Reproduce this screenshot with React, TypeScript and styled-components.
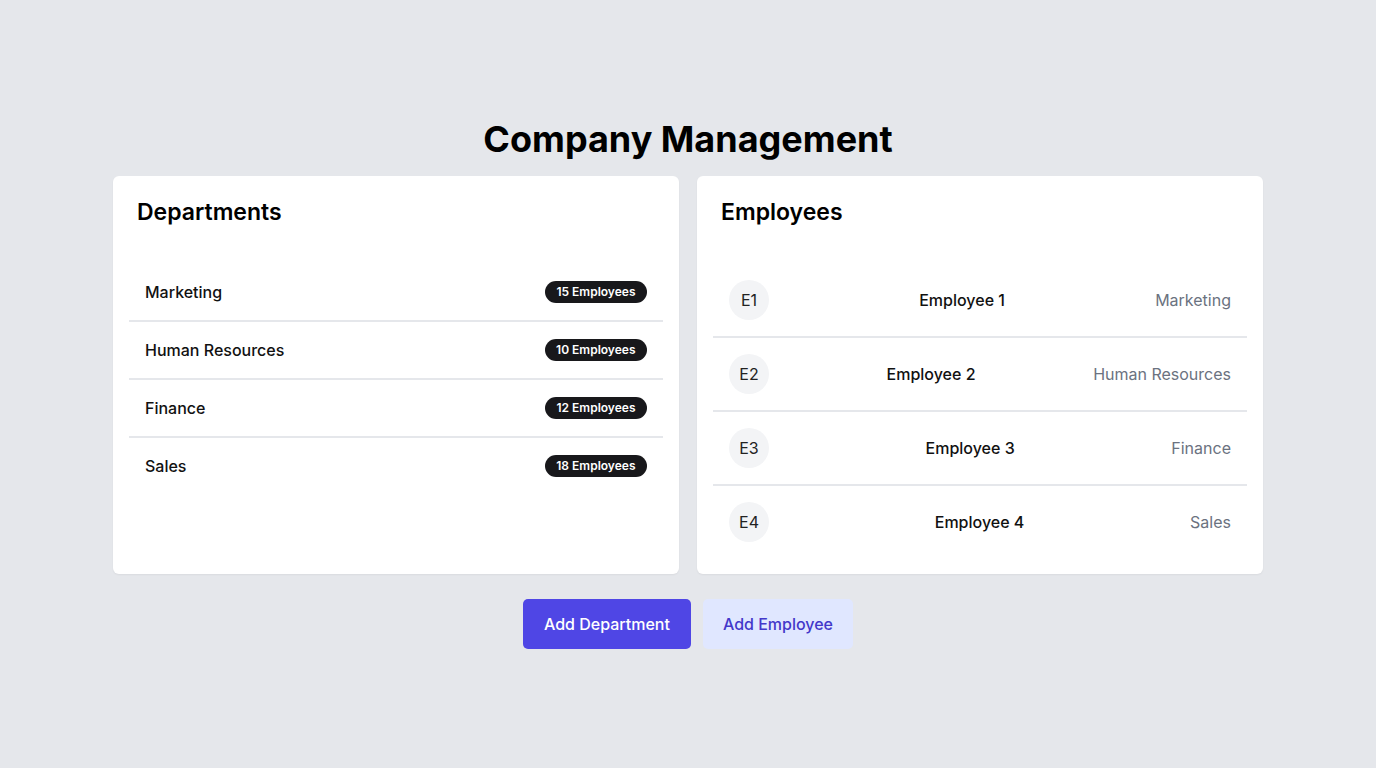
import React from "react";
import styled, { createGlobalStyle } from "styled-components";

const GlobalStyle = createGlobalStyle`
  * { box-sizing: border-box; }
  body {
    margin: 0;
    background: #e5e7eb;
    font-family: Inter, "Noto Sans", sans-serif;
    color: #111;
  }
`;

const Page = styled.div`
  min-height: 100vh;
  display: flex;
  flex-direction: column;
  align-items: center;
  justify-content: center;
  padding: 0 113px;
`;

const Title = styled.h1`
  margin: 0 0 17px;
  font-size: 36px;
  line-height: 40px;
  font-weight: 700;
  color: #000;
`;

const Grid = styled.div`
  width: 100%;
  max-width: 1150px;
  display: grid;
  grid-template-columns: 1fr 1fr;
  gap: 18px;
`;

const Card = styled.section`
  background: #fff;
  border-radius: 6px;
  padding: 24px 16px 15px;
  box-shadow: 0 1px 2px rgba(0, 0, 0, 0.05);
  min-height: 398px;
`;

const CardTitle = styled.h2`
  margin: 0 8px 40px;
  font-size: 23px;
  line-height: 24px;
  font-weight: 600;
  color: #000;
`;

const List = styled.ul`
  list-style: none;
  margin: 0;
  padding: 0;
`;

const DeptRow = styled.li`
  display: flex;
  align-items: center;
  justify-content: space-between;
  padding: 16px;
  line-height: 24px;
  border-bottom: 2px solid #e5e7eb;
  &:last-child { border-bottom: none; }
`;

const DeptName = styled.span`
  font-size: 16px;
  font-weight: 500;
  color: #111;
`;

const Badge = styled.span`
  background: #18181b;
  color: #fff;
  font-size: 12px;
  font-weight: 600;
  line-height: 22px;
  height: 22px;
  padding: 0 11.5px;
  border-radius: 999px;
`;

const EmpRow = styled.li`
  display: flex;
  align-items: center;
  justify-content: space-between;
  padding: 16px;
  border-bottom: 2px solid #e5e7eb;
  &:last-child { border-bottom: none; }
`;

const Avatar = styled.span`
  width: 40px;
  height: 40px;
  border-radius: 50%;
  background: #f3f4f6;
  display: flex;
  align-items: center;
  justify-content: center;
  font-size: 16px;
  color: #222;
`;

const EmpName = styled.span`
  font-size: 16px;
  font-weight: 500;
  color: #111;
`;

const EmpDept = styled.span`
  font-size: 16px;
  color: #6b7280;
`;

const Actions = styled.div`
  display: flex;
  gap: 12px;
  margin-top: 25px;
`;

const Button = styled.button<{ $primary?: boolean }>`
  height: 50px;
  padding: ${(p) => (p.$primary ? "0 21px" : "0 20px")};
  border: none;
  border-radius: 5px;
  font-family: inherit;
  font-size: 16px;
  font-weight: 500;
  cursor: pointer;
  background: ${(p) => (p.$primary ? "#4f46e5" : "#e0e7ff")};
  color: ${(p) => (p.$primary ? "#fff" : "#4338ca")};
`;

const departments = [
  { name: "Marketing", count: 15 },
  { name: "Human Resources", count: 10 },
  { name: "Finance", count: 12 },
  { name: "Sales", count: 18 },
];

const employees = [
  { id: "E1", name: "Employee 1", dept: "Marketing" },
  { id: "E2", name: "Employee 2", dept: "Human Resources" },
  { id: "E3", name: "Employee 3", dept: "Finance" },
  { id: "E4", name: "Employee 4", dept: "Sales" },
];

export default function App() {
  return (
    <>
      <GlobalStyle />
      <Page>
        <Title>Company Management</Title>
        <Grid>
          <Card>
            <CardTitle>Departments</CardTitle>
            <List>
              {departments.map((d) => (
                <DeptRow key={d.name}>
                  <DeptName>{d.name}</DeptName>
                  <Badge>{d.count} Employees</Badge>
                </DeptRow>
              ))}
            </List>
          </Card>
          <Card>
            <CardTitle>Employees</CardTitle>
            <List>
              {employees.map((e) => (
                <EmpRow key={e.id}>
                  <Avatar>{e.id}</Avatar>
                  <EmpName>{e.name}</EmpName>
                  <EmpDept>{e.dept}</EmpDept>
                </EmpRow>
              ))}
            </List>
          </Card>
        </Grid>
        <Actions>
          <Button $primary>Add Department</Button>
          <Button>Add Employee</Button>
        </Actions>
      </Page>
    </>
  );
}
